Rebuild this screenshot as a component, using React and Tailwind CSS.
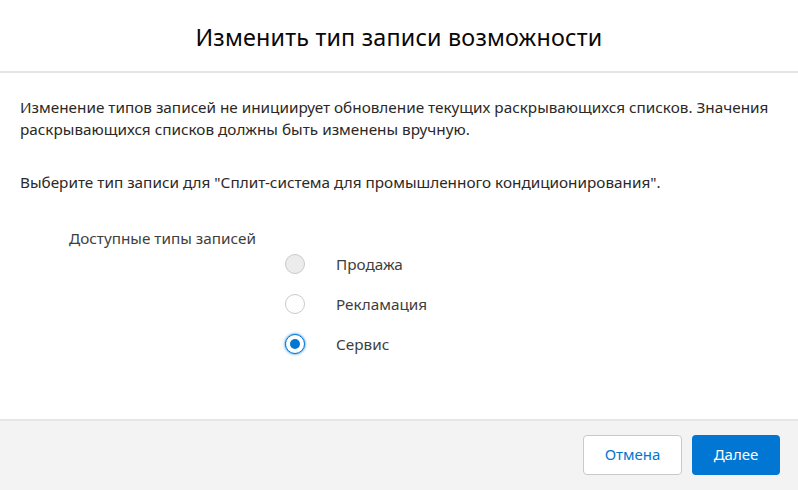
export default function App() {
  const font = { fontFamily: '"Noto Sans", "Open Sans", sans-serif' };
  const Radio = ({ state }) => {
    if (state === "disabled")
      return <span className="w-[20px] h-[20px] rounded-full border border-[#c9c9c9] bg-[#ececec] shrink-0" />;
    if (state === "checked")
      return (
        <span className="w-[20px] h-[20px] rounded-full border border-[#0176d3] bg-white shrink-0 flex items-center justify-center shadow-[0_0_3px_#0176d3]">
          <span className="w-[10px] h-[10px] rounded-full bg-[#0176d3]" />
        </span>
      );
    return <span className="w-[20px] h-[20px] rounded-full border border-[#c9c9c9] bg-white shrink-0" />;
  };
  return (
    <div className="w-[798px] h-[490px] bg-white flex flex-col text-[#181818]" style={font}>
      <div className="h-[73px] pt-[3px] flex items-center justify-center border-b-2 border-[#e5e5e5] shrink-0">
        <h1 className="text-[23.3px] text-[#080707] tracking-[0.2px]">Изменить тип записи возможности</h1>
      </div>
      <div className="flex-1 px-[20px] pt-[23px] text-[15.3px] leading-[22px] text-[#2b2826]">
        <p>Изменение типов записей не инициирует обновление текущих раскрывающихся списков. Значения раскрывающихся списков должны быть изменены вручную.</p>
        <p className="mt-[31px]">Выберите тип записи для "Сплит-система для промышленного кондиционирования".</p>
        <div className="mt-[34px] pl-[49px] text-[#3e3e3c]">Доступные типы записей</div>
        <div className="flex flex-col gap-[18px] pl-[265px] mt-[4px]">
          {[
            ["Продажа", "disabled"],
            ["Рекламация", "empty"],
            ["Сервис", "checked"],
          ].map(([label, st]) => (
            <div key={label} className="flex items-center h-[22px]">
              <Radio state={st} />
              <span className="ml-[31px] text-[#3e3e3c]">{label}</span>
            </div>
          ))}
        </div>
      </div>
      <div className="h-[71px] shrink-0 border-t-2 border-[#e5e5e5] bg-[#f3f3f3] flex items-center justify-end gap-[10px] pr-[18px] pb-[2px]">
        <button className="h-[40px] w-[99px] rounded-[4px] border border-[#c9c9c9] bg-white text-[#0176d3] text-[15px]" style={font}>Отмена</button>
        <button className="h-[40px] w-[88px] rounded-[4px] bg-[#0176d3] text-white text-[15px]" style={font}>Далее</button>
      </div>
    </div>
  );
}
